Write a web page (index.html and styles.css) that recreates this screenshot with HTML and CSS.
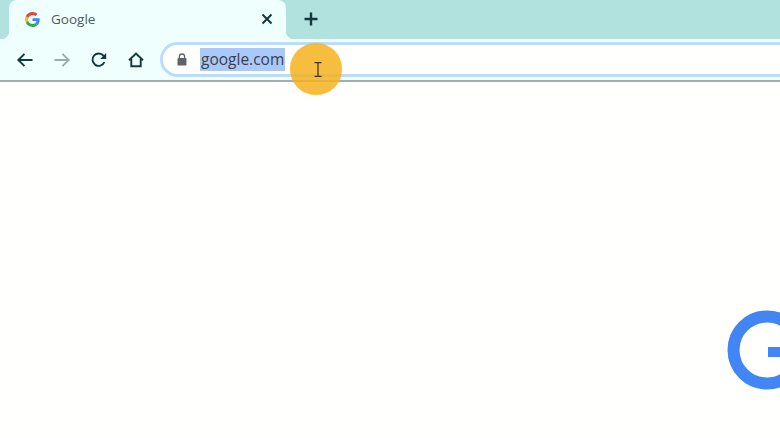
FILE: index.html
```html
<!DOCTYPE html>
<html lang="en">
<head>
    <meta charset="UTF-8">
    <title>Google</title>
    <link rel="stylesheet" href="styles.css">
</head>
<body>
<div class="tabstrip">
    <div class="tab">
        <svg class="favicon" width="15" height="15" viewBox="0 0 48 48">
            <path fill="#EA4335" d="M24 9.5c3.54 0 6.71 1.22 9.21 3.6l6.85-6.85C35.9 2.38 30.47 0 24 0 14.62 0 6.51 5.38 2.56 13.22l7.98 6.19C12.43 13.72 17.74 9.5 24 9.5z"/>
            <path fill="#4285F4" d="M46.98 24.55c0-1.57-.15-3.09-.38-4.55H24v9.02h12.94c-.58 2.96-2.26 5.48-4.78 7.18l7.73 6c4.51-4.18 7.09-10.36 7.09-17.65z"/>
            <path fill="#FBBC05" d="M10.53 28.59c-.5-1.45-.78-2.99-.78-4.59s.27-3.14.78-4.59l-7.98-6.19C.92 16.46 0 20.12 0 24c0 3.88.92 7.54 2.56 10.78l7.97-6.19z"/>
            <path fill="#34A853" d="M24 48c6.48 0 11.93-2.13 15.89-5.81l-7.73-6c-2.15 1.45-4.92 2.3-8.16 2.3-6.26 0-11.57-4.22-13.47-9.91l-7.98 6.19C6.51 42.62 14.62 48 24 48z"/>
        </svg>
        <span class="tab-title">Google</span>
        <svg class="tab-close" width="12" height="12" viewBox="0 0 12 12">
            <path d="M1.5 1.5l9 9M10.5 1.5l-9 9"/>
        </svg>
    </div>
    <svg class="new-tab" width="14" height="14" viewBox="0 0 14 14">
        <path d="M7 0.5v13M0.5 7h13"/>
    </svg>
</div>
<div class="toolbar">
    <svg class="nav-icon" width="18" height="18" viewBox="0 0 18 18">
        <path d="M16.5 9H2.5M8.5 2.8L2.3 9l6.2 6.2"/>
    </svg>
    <svg class="nav-icon disabled" width="18" height="18" viewBox="0 0 18 18">
        <path d="M1.5 9h14M9.5 2.8L15.7 9l-6.2 6.2"/>
    </svg>
    <svg class="nav-icon" width="18" height="18" viewBox="0 0 18 18">
        <path d="M14.4 11.2A6.2 6.2 0 1 1 13.6 4.8L15.4 6.6"/>
        <path class="solid" d="M16.2 1.9v6h-6z"/>
    </svg>
    <svg class="nav-icon home" width="18" height="18" viewBox="0 0 18 18">
        <path d="M2 9.3L9 2.6l7 6.7M4.3 8v7.2h9.4V8"/>
    </svg>
    <div class="omnibox">
        <svg class="lock" width="10" height="13" viewBox="0 0 10 13">
            <path d="M2.4 5.5V3.6a2.6 2.6 0 0 1 5.2 0v1.9" fill="none" stroke="#5f6368" stroke-width="1.3"/>
            <rect x="0.5" y="5" width="9" height="7.6" rx="1" fill="#5f6368"/>
        </svg>
        <span class="url">google.com</span>
    </div>
</div>
<div class="page"></div>

<svg class="big-g" width="53" height="80" viewBox="0 0 53 80">
    <circle cx="40" cy="40" r="33.5" fill="none" stroke="#4285f4" stroke-width="12"/>
    <rect x="41" y="37" width="12" height="10" fill="#4285f4"/>
</svg>

<div class="cursor-mark">
    <svg width="8" height="15" viewBox="0 0 8 15">
        <path d="M0.5 0.7h7M0.5 14.3h7M4 0.7v13.6" fill="none" stroke="#3a3320" stroke-width="1.2"/>
    </svg>
</div>
</body>
</html>
```

FILE: styles.css
```css
*{
    margin:0;
    padding:0;
    box-sizing:border-box;
}
html,body{
    height:100%;
    overflow:hidden;
}
body{
    position:relative;
    display:flex;
    flex-direction:column;
    background:#fffffd;
    font-family:"Open Sans","Liberation Sans",sans-serif;
}
svg{
    display:block;
    flex:none;
}
.tabstrip{
    height:39px;
    padding-left:9px;
    display:flex;
    align-items:center;
    background:#b2e2de;
}
.tab{
    position:relative;
    width:277px;
    height:39px;
    padding:0 13px 0 16px;
    display:flex;
    align-items:center;
    background:#effffe;
    border-radius:8px 8px 0 0;
}
.tab::before,.tab::after{
    content:"";
    position:absolute;
    bottom:0;
    width:8px;
    height:8px;
}
.tab::before{
    left:-8px;
    background:radial-gradient(circle at 0 0,transparent 8px,#effffe 8.5px);
}
.tab::after{
    right:-8px;
    background:radial-gradient(circle at 100% 0,transparent 8px,#effffe 8.5px);
}
.favicon{
    margin-top:-1px;
}
.tab-title{
    flex:1;
    margin:-2px 0 0 11px;
    font-size:13.5px;
    color:#4d5b60;
}
.tab-close{
    margin-top:-1px;
}
.tab-close path{
    fill:none;
    stroke:#12393d;
    stroke-width:2;
}
.new-tab{
    margin:-1px 0 0 18px;
}
.new-tab path{
    fill:none;
    stroke:#12393d;
    stroke-width:2.4;
}
.toolbar{
    height:43px;
    padding-left:16px;
    display:flex;
    align-items:center;
    background:#effffe;
    border-bottom:2px solid #a4adad;
}
.nav-icon{
    margin-right:19px;
}
.nav-icon.home{
    margin-right:15px;
}
.nav-icon path{
    fill:none;
    stroke:#12393d;
    stroke-width:1.9;
}
.nav-icon path.solid{
    fill:#12393d;
    stroke:none;
}
.nav-icon.disabled path{
    stroke:#9aaeac;
}
.omnibox{
    flex:1;
    height:35px;
    padding-left:14px;
    display:flex;
    align-items:center;
    background:#fffffd;
    border:3px solid #bcdcfa;
    border-right:none;
    border-radius:18px 0 0 18px;
}
.url{
    margin-left:13px;
    padding:0 1px;
    font-size:15.5px;
    line-height:23px;
    color:#3c4043;
    background:#a9c8fb;
}
.page{
    flex:1;
}
.big-g{
    position:absolute;
    left:727px;
    top:310px;
}
.cursor-mark{
    position:absolute;
    left:290px;
    top:43px;
    width:52px;
    height:52px;
    display:flex;
    align-items:center;
    justify-content:center;
    background:rgba(246,177,29,.85);
    box-shadow:0 0 1px rgba(246,177,29,.6);
    border-radius:50%;
}
.cursor-mark svg{
    margin-left:3px;
}
```
